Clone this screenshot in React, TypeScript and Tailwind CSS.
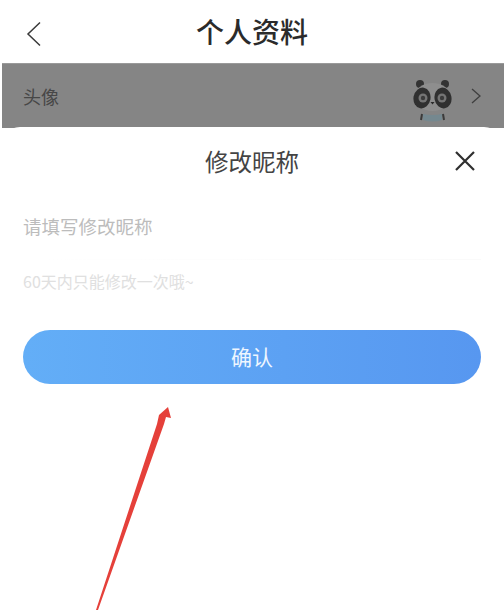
const cjk = 'font-["Noto_Sans_CJK_SC","Liberation_Sans",sans-serif]';

const PandaAvatar = () => (
  <svg width="40" height="46" viewBox="0 0 40 46" className="mt-[10px]">
    <circle cx="8" cy="6" r="4" fill="#333" />
    <circle cx="33" cy="6" r="4" fill="#333" />
    <ellipse cx="20.5" cy="19" rx="18" ry="14" fill="#8e8e8e" />
    <ellipse cx="10" cy="20" rx="8.5" ry="10.5" fill="#303030" transform="rotate(10 10 20)" />
    <ellipse cx="31" cy="20" rx="8.5" ry="10.5" fill="#303030" transform="rotate(-10 31 20)" />
    <circle cx="11" cy="20" r="4.5" fill="#757575" />
    <circle cx="30" cy="20" r="4.5" fill="#757575" />
    <circle cx="11" cy="20" r="2.2" fill="#3c3c3c" />
    <circle cx="30" cy="20" r="2.2" fill="#3c3c3c" />
    <path d="M18.5 24h4l-2 2.5z" fill="#2a2a2a" />
    <path d="M11 36q9.5 2 19 0v6q-9.5 3-19 0z" fill="#75888f" />
    <path d="M10 36l-1 6M31 36l1 6" stroke="#3a3a3a" strokeWidth="2" fill="none" />
  </svg>
);

export default function App() {
  return (
    <div className={`relative h-[610px] w-[504px] overflow-hidden bg-white ${cjk}`}>
      {/* header */}
      <div className="relative flex h-[63px] items-center justify-center">
        <svg width="18" height="28" viewBox="0 0 18 28" className="absolute left-[25px] top-[20px]">
          <path d="M15 2.5L3 14l12 11.5" fill="none" stroke="#3a3a3a" strokeWidth="1.5" />
        </svg>
        <h1 className="-mt-[2px] text-[28px] font-medium leading-none text-[#2b2b2b]">个人资料</h1>
      </div>

      {/* row behind the overlay */}
      <div className="ml-[2px] flex h-[65px] items-center justify-between border-t border-[#9a9a9a] bg-[#858585] pl-[21px] pr-[22px]">
        <span className="text-[18px] text-[#474747]">头像</span>
        <div className="flex items-center gap-[18px]">
          <PandaAvatar />
          <svg width="12" height="18" viewBox="0 0 12 18">
            <path d="M2 2l8 7-8 7" fill="none" stroke="#3f3f3f" strokeWidth="1.3" />
          </svg>
        </div>
      </div>

      {/* bottom sheet */}
      <div className="-mt-px h-[483px] rounded-t-[20px] bg-white px-[23px]">
        <div className="relative flex h-[66px] items-center justify-center pt-[3px]">
          <h2 className="text-[23.5px] leading-none text-[#444]">修改昵称</h2>
          <svg width="22" height="22" viewBox="0 0 22 22" className="absolute right-[5px] top-[23px]">
            <path d="M2 2l18 18M20 2L2 20" fill="none" stroke="#2f2f2f" strokeWidth="2.2" />
          </svg>
        </div>
        <div className="mt-[24px] text-[18.5px] leading-none text-[#bcbcbc]">请填写修改昵称</div>
        <div className="mt-[23px] h-px bg-gradient-to-r from-white to-[#fafafa]" />
        <div className="mt-[13px] text-[16px] leading-none text-[#e0e0e0]">60天内只能修改一次哦~</div>
        <button className="mt-[41.5px] flex h-[54px] w-[458px] items-center justify-center rounded-full bg-gradient-to-r from-[#63aef7] to-[#5797f0] text-[21px] text-[#eef6ff]">
          确认
        </button>
      </div>

      {/* red annotation arrow */}
      <svg width="504" height="610" viewBox="0 0 504 610" className="absolute left-0 top-0">
        <path
          d="M168 407L171 418L166 417L164 424L98 610L96 610L157 424L159 415Z"
          fill="#e5403a"
        />
      </svg>
    </div>
  );
}
